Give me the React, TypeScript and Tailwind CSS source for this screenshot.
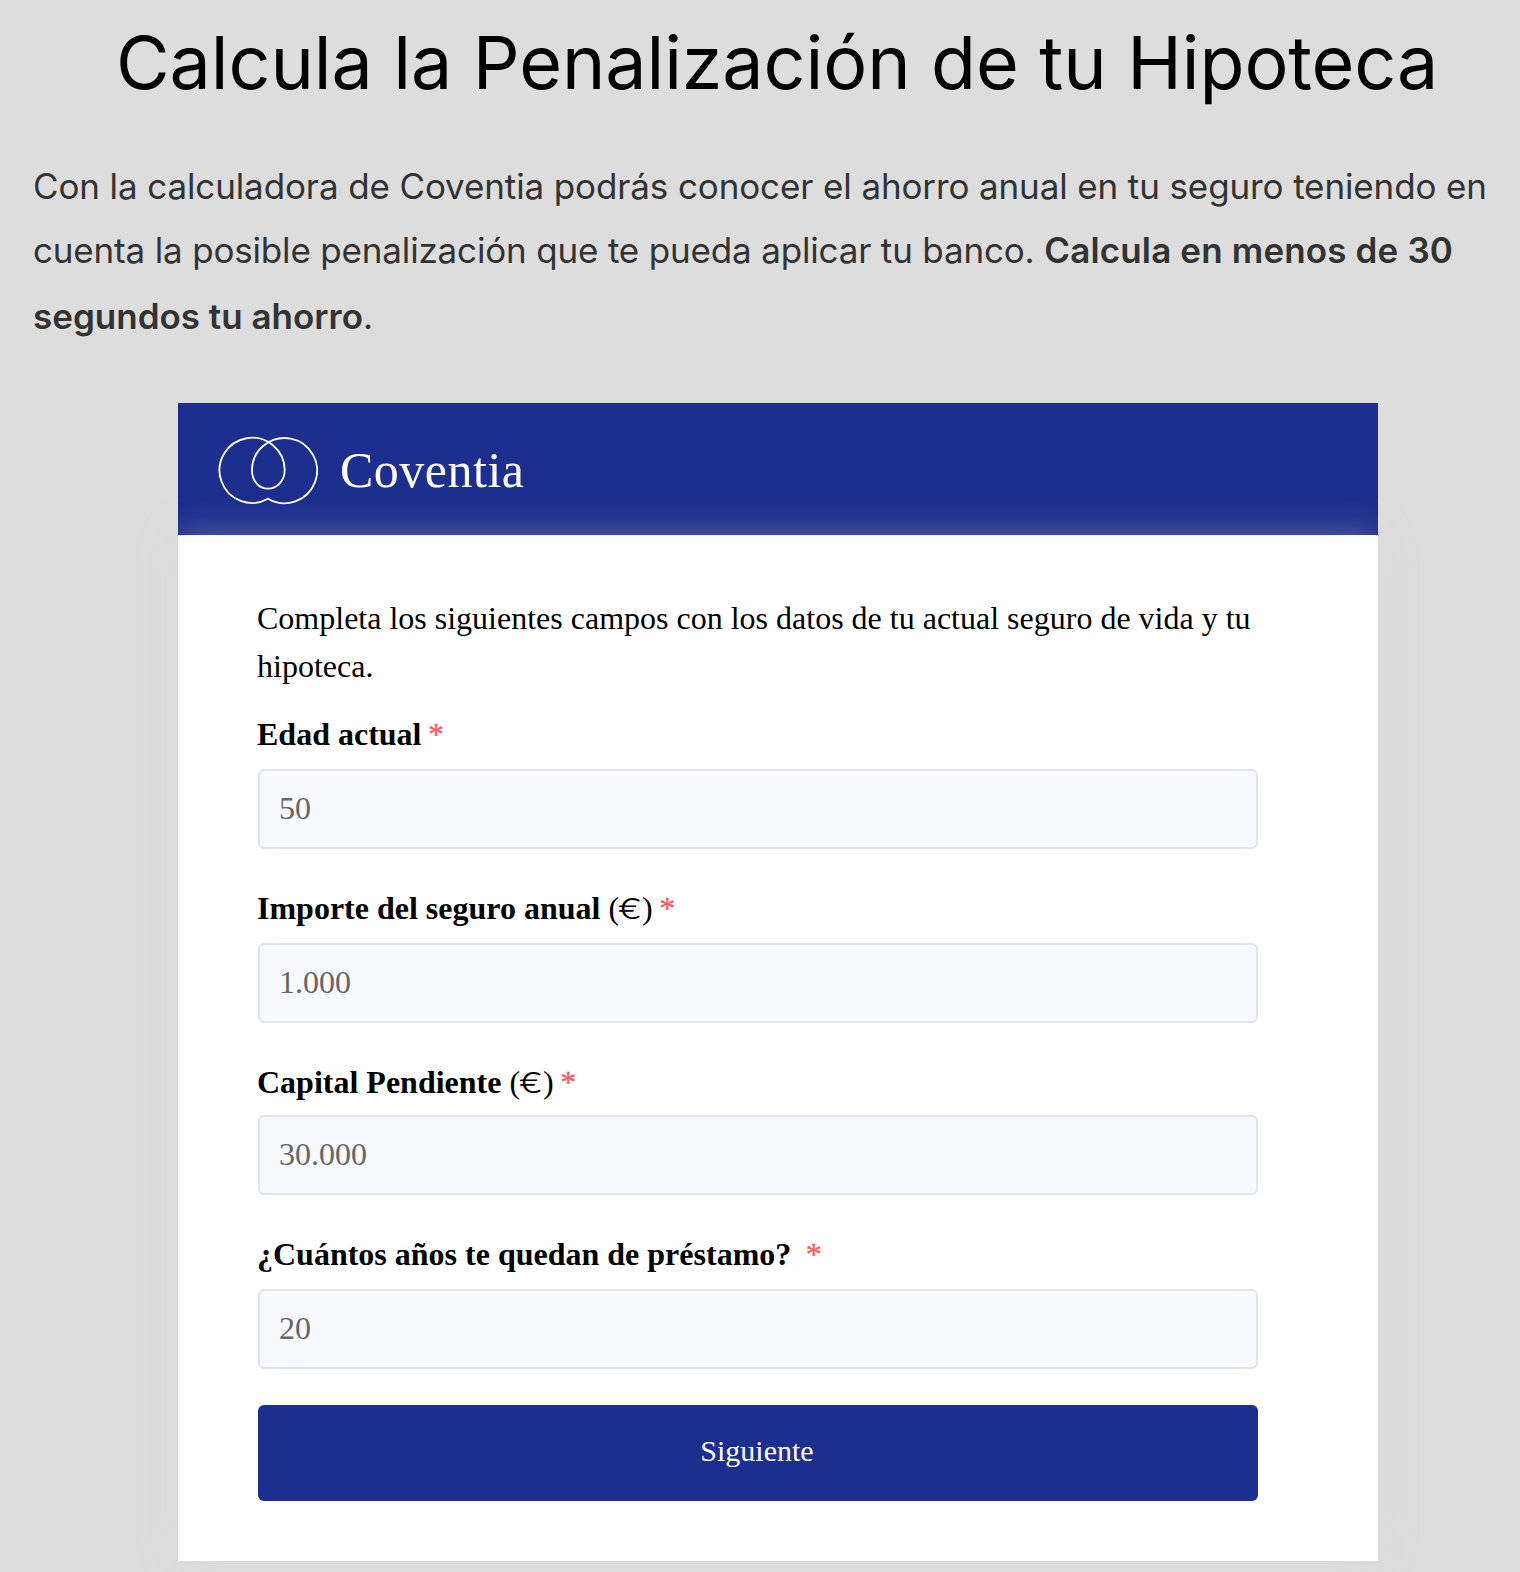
import type { ReactNode } from "react";

type FieldProps = {
  id: string;
  label: ReactNode;
  placeholder: string;
  inputClass?: string;
};

function Logo() {
  return (
    <svg
      className="mt-[32px] h-[70px] w-[100px]"
      viewBox="218 435 100 70"
      fill="none"
      stroke="#fff"
      strokeWidth="1.8"
      strokeLinejoin="miter"
      aria-hidden="true"
    >
      <path d="M268 498.8A32.6 32.6 0 1 1 284.7 470C284.7 480.5 277 488.7 268 488.7C259 488.7 251.9 480.5 251.9 470A32.6 32.6 0 1 1 268 498.8Z" />
    </svg>
  );
}

function Euro() {
  return (
    <span className="font-normal">
      {" ("}
      <span className="ml-[-1px] inline-block w-[24px] scale-x-125 text-center font-['Inter',sans-serif] text-[29px] leading-none font-light">€</span>
      {")"}
    </span>
  );
}

function Field({ id, label, placeholder, inputClass = "mt-[15px]" }: FieldProps) {
  return (
    <div className="flex flex-col">
      <label htmlFor={id} className="h-10 text-[32px] leading-[40px] font-bold whitespace-pre text-black">
        {label}
        <span className="ml-[-1.5px] font-normal text-[#f9585d] [-webkit-text-stroke:0.3px_#f9585d]"> *</span>
      </label>
      <input
        id={id}
        placeholder={placeholder}
        className={`ml-px h-20 rounded-[6px] border-2 border-[#dfe6f0] bg-[#f7f9fd] px-[19px] pb-[2px] text-[32px] text-[#666] outline-none placeholder:text-[#666] ${inputClass}`}
      />
    </div>
  );
}

export default function App() {
  return (
    <div className="h-[1572px] w-[1520px] overflow-hidden bg-[#ddd] pt-[19px]">
      <h1 className="pl-[116px] font-['Inter',sans-serif] text-[73.5px] leading-[88px] font-[370] tracking-[-0.09px] whitespace-nowrap text-black">
        Calcula la Penalización de tu Hipoteca
      </h1>
      <p className="mt-[47px] flex flex-col pl-[33px] font-['Inter',sans-serif] text-[35px] whitespace-pre text-[#333]">
        <span className="h-16 leading-[64px] tracking-[-0.12px]">
          Con la calculadora de Coventia podrás conocer el ahorro anual en tu seguro teniendo en
        </span>
        <span className="h-16 leading-[64px] tracking-[-0.17px]">
          cuenta la posible penalización que te pueda aplicar tu banco.{" "}
          <strong className="font-semibold tracking-[0.15px]">Calcula en menos de 30</strong>
        </span>
        <span className="h-[68px] leading-[68px]">
          <strong className="font-semibold">segundos tu ahorro</strong>.
        </span>
      </p>

      <div className="mt-[53px] ml-[178px] w-[1200px] font-['Liberation_Serif',serif]">
        <header className="flex h-[132px] items-start gap-[22px] bg-[#1c2e8e] pl-10">
          <Logo />
          <span className="mt-[37px] text-[50px] leading-[60px] tracking-[0.5px] text-white">Coventia</span>
        </header>
        <main className="h-[1026px] bg-white pt-[59px] pr-[120px] pl-[79px] shadow-[0_-2px_36px_-2px_rgba(214,214,214,0.36)]">
          <p className="w-[1010px] text-[32px] leading-[48px] text-black">
            Completa los siguientes campos con los datos de tu actual seguro de vida y tu hipoteca.
          </p>
          <form className="mt-6 flex flex-col gap-[39px]" onSubmit={(e) => e.preventDefault()}>
            <Field id="edad" label="Edad actual" placeholder="50" />
            <Field id="importe" label={<>Importe del seguro anual<Euro /></>} placeholder="1.000" />
            <Field id="capital" label={<>Capital Pendiente<Euro /></>} placeholder="30.000" inputClass="mt-[13px]" />
            <Field id="plazo" label="¿Cuántos años te quedan de préstamo? " placeholder="20" />
            <button type="submit" className="mt-[-3px] ml-px h-24 rounded-[6px] bg-[#1c2e8e] pr-[2px] pb-[5px] text-[30px] text-white">
              Siguiente
            </button>
          </form>
        </main>
      </div>
    </div>
  );
}
